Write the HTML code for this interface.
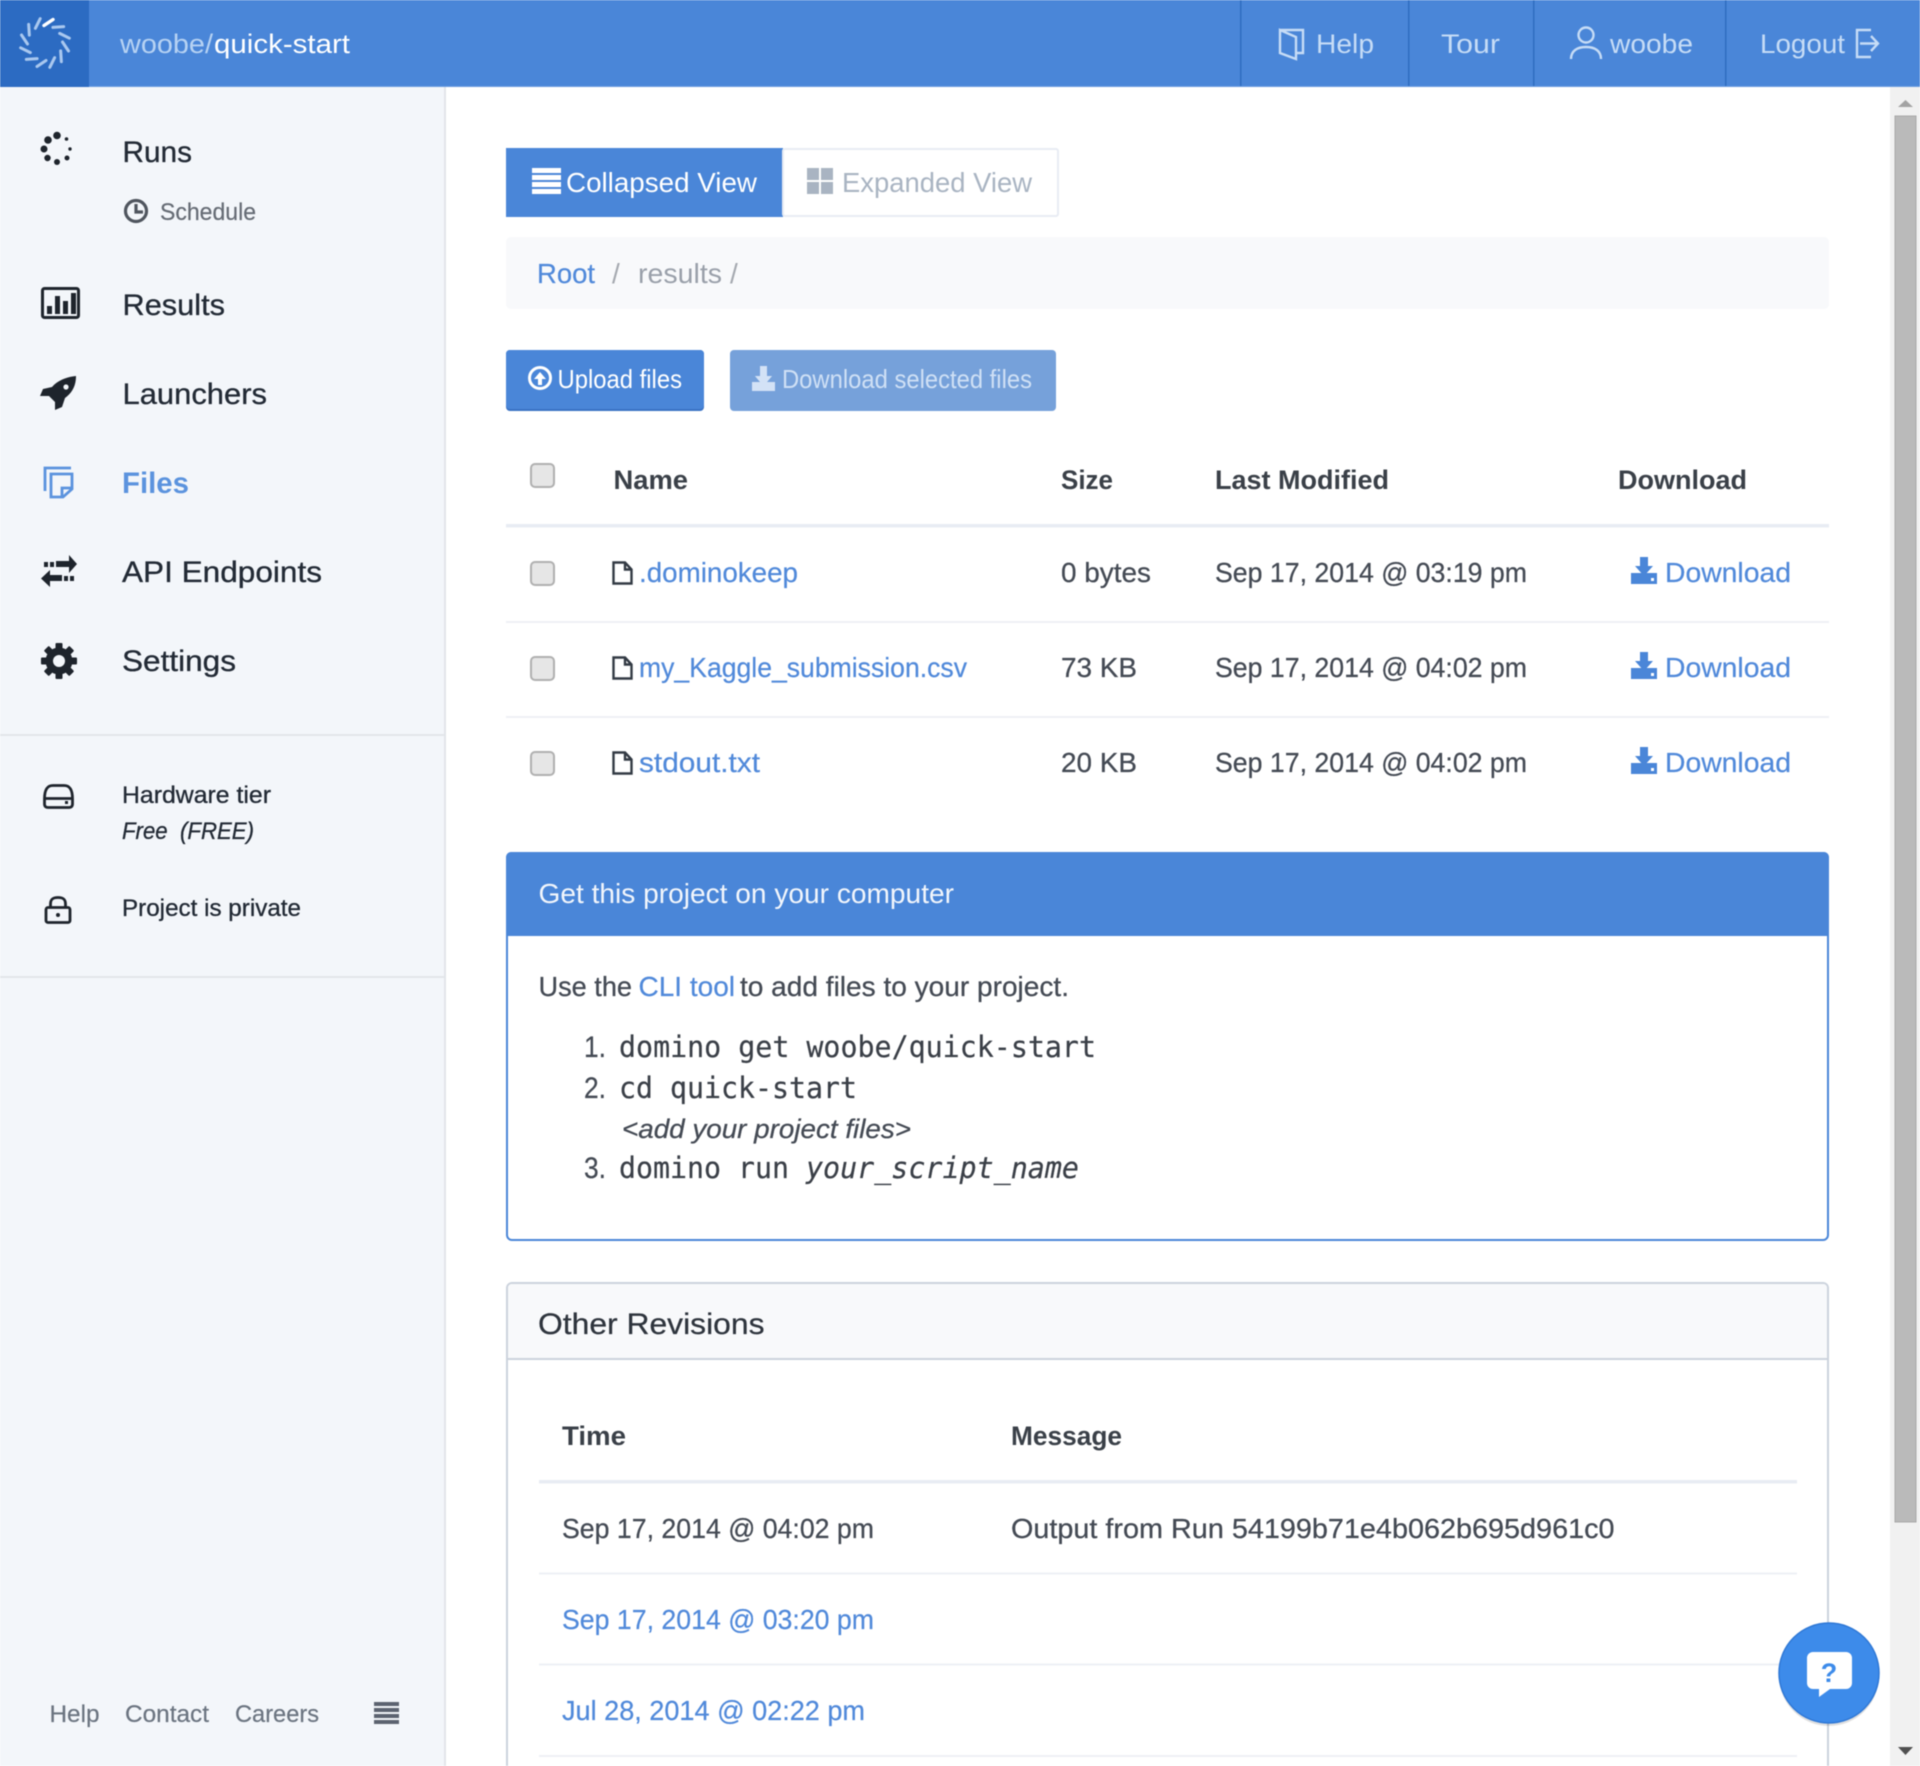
<!DOCTYPE html>
<html><head><meta charset="utf-8"><title>woobe/quick-start</title>
<style>
html,body{margin:0;padding:0;background:#fff;width:1920px;height:1766px;overflow:hidden}
svg{display:block;filter:blur(.45px)}
text{font-family:"Liberation Sans",sans-serif;white-space:pre}
.d{fill:#222a35;stroke:#222a35;stroke-width:.3px}.g{fill:#444a54;stroke:#444a54;stroke-width:.25px}.l{fill:#5089da;stroke:#5089da;stroke-width:.2px}.h{fill:#c6dcf6}.m{font-family:"DejaVu Sans Mono","Liberation Mono",monospace;fill:#3a3f47;stroke:#3a3f47;stroke-width:.2px}
</style></head><body>
<svg width="1920" height="1766" viewBox="0 0 1920 1766" xmlns="http://www.w3.org/2000/svg">
<defs>
<symbol id="dl" viewBox="0 0 26 27" width="26" height="27"><path d="M0 16H26V27H0Z" fill="#4a86d8"/><path d="M9 0H17V9H22L13 19L4 9H9Z" fill="#4a86d8" stroke="#fff" stroke-width="0"/><path d="M3 14L13 21L23 14" fill="none" stroke="#fff" stroke-width="0"/><rect x="20" y="21" width="3" height="3" fill="#fff"/></symbol>
<symbol id="fi" viewBox="0 0 21 24" width="21" height="24"><path d="M1.500 1.500H13L19.500 8.500V22.500H1.500Z M13 1.500V8.500H19.500" fill="none" stroke="#333a44" stroke-width="2.400"/></symbol>
</defs>

<!-- content background -->
<rect width="1920" height="1766" fill="#fff"/>

<!-- sidebar -->
<rect x="0" y="87" width="444" height="1679" fill="#f3f6fa"/>
<rect x="444" y="87" width="2" height="1679" fill="#e2e5ea"/>
<rect x="0" y="734" width="444" height="2" fill="#e3e6ea"/>
<rect x="0" y="976" width="444" height="2" fill="#e3e6ea"/>

<!-- header -->
<rect x="0" y="0" width="1920" height="87" fill="#4a86d8"/>
<rect x="0" y="86" width="1920" height="1" fill="#6c9de0"/>
<rect x="0" y="0" width="89" height="87" fill="#2c6bc2"/>
<g transform="translate(45 43)" stroke-width="3" stroke-linecap="round" stroke="#a9c8ef">
<path d="M-1-17.500L8-23.500" stroke="#fff" stroke-width="3.400"/>
<path d="M-1-17.500L8-23.500" transform="rotate(30)"/><path d="M-1-17.500L8-23.500" transform="rotate(60)"/><path d="M-1-17.500L8-23.500" transform="rotate(90)"/>
<path d="M-1-17.500L8-23.500" transform="rotate(120)"/><path d="M-1-17.500L8-23.500" transform="rotate(150)"/><path d="M-1-17.500L8-23.500" transform="rotate(180)"/>
<path d="M-1-17.500L8-23.500" transform="rotate(210)"/><path d="M-1-17.500L8-23.500" transform="rotate(240)"/><path d="M-1-17.500L8-23.500" transform="rotate(270)"/>
<path d="M-1-17.500L8-23.500" transform="rotate(300)"/><path d="M-1-17.500L8-23.500" transform="rotate(330)"/>
</g>
<text x="120" y="53" font-size="27" fill="#b6d2f3" textLength="93" lengthAdjust="spacingAndGlyphs">woobe/</text>
<text x="214" y="53" font-size="27" fill="#fff" textLength="136" lengthAdjust="spacingAndGlyphs">quick-start</text>

<g fill="#2f6dc0">
<rect x="1240" y="0" width="1.500" height="86"/><rect x="1408" y="0" width="1.500" height="86"/><rect x="1533" y="0" width="1.500" height="86"/><rect x="1725" y="0" width="1.500" height="86"/>
</g>
<g fill="none" stroke="#c6dcf6" stroke-width="2.400">
<path d="M1280 30H1303V53H1296 M1280 30V53L1296 59V37L1280 30Z"/>
<circle cx="1586" cy="35" r="7.500"/>
<path d="M1571 59C1571 51 1577 47 1586 47C1595 47 1601 51 1601 59"/>
<path d="M1871 30H1857V57H1871 M1860 43.500H1878 M1871 36L1878 43.500L1871 51"/>
</g>
<text class="h" x="1316" y="53" font-size="27" textLength="58" lengthAdjust="spacingAndGlyphs">Help</text>
<text class="h" x="1441" y="53" font-size="27" textLength="59" lengthAdjust="spacingAndGlyphs">Tour</text>
<text class="h" x="1610" y="53" font-size="27" textLength="83" lengthAdjust="spacingAndGlyphs">woobe</text>
<text class="h" x="1760" y="53" font-size="27" textLength="85" lengthAdjust="spacingAndGlyphs">Logout</text>

<!-- sidebar icons -->
<g fill="#1e242c">
<circle cx="57" cy="135.500" r="3.800"/><circle cx="66.500" cy="139" r="1.800"/><circle cx="70" cy="149" r="1.700"/><circle cx="67" cy="158" r="2.500"/><circle cx="57" cy="162" r="3"/><circle cx="47.500" cy="158" r="3.200"/><circle cx="44" cy="149" r="3.500"/><circle cx="48" cy="140" r="3.800"/>
</g>
<g fill="none" stroke="#4f555e" stroke-width="3.200"><circle cx="136" cy="211" r="10.500"/><path d="M136 204V212H143"/></g>
<rect x="42.500" y="288.500" width="36" height="29" rx="2" fill="none" stroke="#1e242c" stroke-width="3"/>
<g fill="#1e242c"><rect x="47" y="306" width="5" height="8"/><rect x="55" y="296" width="5" height="18"/><rect x="63" y="301" width="5" height="13"/><rect x="71" y="293" width="5" height="21"/></g>
<path d="M76 376C66 377 57 381 52 387L43 389L40 396L49 396L55 402L55 410L62 407L65 398C72 393 76 386 76 376Z" fill="#1e242c"/><circle cx="66" cy="387" r="2.600" fill="#f3f6fa"/>
<g fill="none" stroke="#5b93de" stroke-width="2.800"><path d="M71 468H45V491"/><path d="M51 474H72V489L63 497H51Z"/><path d="M62 497V488H72"/></g>
<g fill="#1e242c"><path d="M56 561H69V555L77 564L69 573V567H56Z"/><rect x="44" y="562" width="4" height="5"/><rect x="50" y="562" width="4" height="5"/><path d="M62 575H50V570L41 578.500L50 587V581H62Z"/><rect x="64" y="576" width="4" height="5"/><rect x="70" y="576" width="4" height="5"/></g>
<g fill="#1e242c" transform="translate(59 661)"><circle r="13.500"/><g><rect x="-3.500" y="-18" width="7" height="36" rx="1"/><rect x="-3.500" y="-18" width="7" height="36" rx="1" transform="rotate(45)"/><rect x="-3.500" y="-18" width="7" height="36" rx="1" transform="rotate(90)"/><rect x="-3.500" y="-18" width="7" height="36" rx="1" transform="rotate(135)"/></g><circle r="6" fill="#f3f6fa"/></g>
<g fill="none" stroke="#1e242c" stroke-width="2.800"><path d="M44.500 799C44.500 790 47 785.500 53 785.500H64C70 785.500 72.500 790 72.500 799V804C72.500 806.500 71 807.500 69 807.500H48C46 807.500 44.500 806.500 44.500 804Z M44.500 798.500H72.500"/></g><rect x="65" y="801" width="3" height="3" fill="#1e242c"/>
<g fill="none" stroke="#1e242c" stroke-width="2.800"><rect x="46" y="907.500" width="24" height="15" rx="2"/><path d="M50.500 907V904C50.500 899 53 897.500 58 897.500C63 897.500 65.500 899 65.500 904V907"/></g><circle cx="58" cy="915" r="2" fill="#1e242c"/>
<g fill="#5c6370"><rect x="374" y="1702" width="25" height="4"/><rect x="374" y="1708" width="25" height="4"/><rect x="374" y="1714" width="25" height="4"/><rect x="374" y="1720" width="25" height="4"/></g>

<!-- sidebar text -->
<text class="d" x="122.500" y="162" font-size="30" textLength="69.500" lengthAdjust="spacingAndGlyphs">Runs</text>
<text x="160" y="220" font-size="24" fill="#666c75" stroke="#666c75" stroke-width=".2" textLength="96" lengthAdjust="spacingAndGlyphs">Schedule</text>
<text class="d" x="122.500" y="315" font-size="30" textLength="102.500" lengthAdjust="spacingAndGlyphs">Results</text>
<text class="d" x="122.500" y="404" font-size="30" textLength="144.500" lengthAdjust="spacingAndGlyphs">Launchers</text>
<text x="122" y="493" font-size="30" font-weight="bold" fill="#5b93de" textLength="67" lengthAdjust="spacingAndGlyphs">Files</text>
<text class="d" x="122" y="582" font-size="30" textLength="200" lengthAdjust="spacingAndGlyphs">API Endpoints</text>
<text class="d" x="122" y="671" font-size="30" textLength="114" lengthAdjust="spacingAndGlyphs">Settings</text>
<text class="d" x="122" y="803" font-size="24" textLength="149" lengthAdjust="spacingAndGlyphs">Hardware tier</text>
<text class="d" x="122" y="839" font-size="24" font-style="italic" textLength="132" lengthAdjust="spacingAndGlyphs">Free  (FREE)</text>
<text class="d" x="122" y="916" font-size="24" textLength="179" lengthAdjust="spacingAndGlyphs">Project is private</text>
<text x="49.500" y="1722" font-size="24" fill="#6b7480" stroke="#6b7480" stroke-width=".2" textLength="50" lengthAdjust="spacingAndGlyphs">Help</text>
<text x="125" y="1722" font-size="24" fill="#6b7480" stroke="#6b7480" stroke-width=".2" textLength="84" lengthAdjust="spacingAndGlyphs">Contact</text>
<text x="235" y="1722" font-size="24" fill="#6b7480" stroke="#6b7480" stroke-width=".2" textLength="84" lengthAdjust="spacingAndGlyphs">Careers</text>

<!-- view toggle -->
<rect x="506" y="148" width="277" height="69" fill="#4a86d8"/>
<rect x="783" y="149" width="275" height="67" rx="2" fill="#fff" stroke="#e8ecf3" stroke-width="2"/>
<g fill="#fff"><rect x="532" y="168" width="29" height="5"/><rect x="532" y="175" width="29" height="5"/><rect x="532" y="182" width="29" height="5"/><rect x="532" y="189" width="29" height="5"/></g>
<text x="566" y="192" font-size="28" fill="#fff" textLength="191" lengthAdjust="spacingAndGlyphs">Collapsed View</text>
<g fill="#a9b4c2"><rect x="807" y="168" width="12" height="12"/><rect x="821" y="168" width="12" height="12"/><rect x="807" y="182" width="12" height="12"/><rect x="821" y="182" width="12" height="12"/></g>
<text x="842" y="192" font-size="28" fill="#a9b4c2" textLength="190" lengthAdjust="spacingAndGlyphs">Expanded View</text>

<!-- breadcrumb -->
<rect x="506" y="237" width="1323" height="72" rx="5" fill="#f8f9fb"/>
<text class="l" x="537" y="283" font-size="28" textLength="58" lengthAdjust="spacingAndGlyphs">Root</text>
<text x="612" y="283" font-size="28" fill="#a5a9b0">/</text>
<text x="638" y="283" font-size="28" fill="#9aa0aa" textLength="84" lengthAdjust="spacingAndGlyphs">results</text>
<text x="730" y="283" font-size="28" fill="#a5a9b0">/</text>

<!-- buttons -->
<rect x="506" y="350" width="198" height="61" rx="4" fill="#3a72c4"/>
<rect x="506" y="350" width="198" height="59" rx="4" fill="#4a86d8"/>
<circle cx="540" cy="378" r="10.500" fill="none" stroke="#fff" stroke-width="3"/>
<path d="M540 372L546 379H542V385H538V379H534Z" fill="#fff"/>
<text x="557.500" y="388" font-size="26" fill="#fff" textLength="124.500" lengthAdjust="spacingAndGlyphs">Upload files</text>
<rect x="730" y="350" width="326" height="61" rx="4" fill="#76a1da"/>
<path d="M760 366H767V376H772L763.500 386L755 376H760Z" fill="#d3e2f6"/><path d="M752 382H775V391H752Z" fill="#d3e2f6"/><path d="M755 376H772L763.500 386Z" fill="#d3e2f6" stroke="#76a1da" stroke-width="0"/>
<text x="782" y="388" font-size="26" fill="#cfe0f5" textLength="250" lengthAdjust="spacingAndGlyphs">Download selected files</text>

<!-- file table -->
<g fill="#e6e6e6" stroke="#b0b0b0" stroke-width="2">
<rect x="531" y="464" width="23" height="23" rx="4"/>
<rect x="531" y="562" width="23" height="23" rx="4"/>
<rect x="531" y="657" width="23" height="23" rx="4"/>
<rect x="531" y="752" width="23" height="23" rx="4"/>
</g>
<text x="613.500" y="489" font-size="27" font-weight="bold" fill="#3a4048" textLength="74.500" lengthAdjust="spacingAndGlyphs">Name</text>
<text x="1061" y="489" font-size="27" font-weight="bold" fill="#3a4048" textLength="52" lengthAdjust="spacingAndGlyphs">Size</text>
<text x="1215" y="489" font-size="27" font-weight="bold" fill="#3a4048" textLength="174" lengthAdjust="spacingAndGlyphs">Last Modified</text>
<text x="1618" y="489" font-size="27" font-weight="bold" fill="#3a4048" textLength="129" lengthAdjust="spacingAndGlyphs">Download</text>
<rect x="506" y="524" width="1323" height="3.500" fill="#e8ecf3"/>
<rect x="506" y="621" width="1323" height="2" fill="#eef0f5"/>
<rect x="506" y="716" width="1323" height="2" fill="#eef0f5"/>

<use href="#fi" x="612" y="561"/><use href="#fi" x="612" y="656"/><use href="#fi" x="612" y="751"/>
<text class="l" x="639" y="582" font-size="28" textLength="159" lengthAdjust="spacingAndGlyphs">.dominokeep</text>
<text class="l" x="639" y="677" font-size="28" textLength="328" lengthAdjust="spacingAndGlyphs">my_Kaggle_submission.csv</text>
<text class="l" x="639" y="772" font-size="28" textLength="121" lengthAdjust="spacingAndGlyphs">stdout.txt</text>
<text class="g" x="1061" y="582" font-size="28" textLength="90" lengthAdjust="spacingAndGlyphs">0 bytes</text>
<text class="g" x="1061" y="677" font-size="28" textLength="76" lengthAdjust="spacingAndGlyphs">73 KB</text>
<text class="g" x="1061" y="772" font-size="28" textLength="76" lengthAdjust="spacingAndGlyphs">20 KB</text>
<text class="g" x="1215" y="582" font-size="28" textLength="312" lengthAdjust="spacingAndGlyphs">Sep 17, 2014 @ 03:19 pm</text>
<text class="g" x="1215" y="677" font-size="28" textLength="312" lengthAdjust="spacingAndGlyphs">Sep 17, 2014 @ 04:02 pm</text>
<text class="g" x="1215" y="772" font-size="28" textLength="312" lengthAdjust="spacingAndGlyphs">Sep 17, 2014 @ 04:02 pm</text>
<use href="#dl" x="1631" y="557"/><use href="#dl" x="1631" y="652"/><use href="#dl" x="1631" y="747"/>
<text class="l" x="1665" y="582" font-size="28" textLength="126" lengthAdjust="spacingAndGlyphs">Download</text>
<text class="l" x="1665" y="677" font-size="28" textLength="126" lengthAdjust="spacingAndGlyphs">Download</text>
<text class="l" x="1665" y="772" font-size="28" textLength="126" lengthAdjust="spacingAndGlyphs">Download</text>

<!-- get project panel -->
<rect x="507" y="853" width="1321" height="387" rx="5" fill="#fff" stroke="#4a86d8" stroke-width="2"/>
<path d="M506 857a5 5 0 0 1 5-5H1824a5 5 0 0 1 5 5V936H506Z" fill="#4a86d8"/>
<text x="538.500" y="903" font-size="28" fill="#f2f6fc" textLength="415.500" lengthAdjust="spacingAndGlyphs">Get this project on your computer</text>
<text class="g" x="538.500" y="996" font-size="28" textLength="93.500" lengthAdjust="spacingAndGlyphs">Use the</text>
<text class="l" x="638.500" y="996" font-size="28" textLength="96.500" lengthAdjust="spacingAndGlyphs">CLI tool</text>
<text class="g" x="740" y="996" font-size="28" textLength="329" lengthAdjust="spacingAndGlyphs">to add files to your project.</text>
<text class="g" x="584" y="1057" font-size="30" textLength="22" lengthAdjust="spacingAndGlyphs">1.</text>
<text class="m" x="619" y="1057" font-size="29" textLength="477" lengthAdjust="spacingAndGlyphs">domino get woobe/quick-start</text>
<text class="g" x="584" y="1098" font-size="30" textLength="22" lengthAdjust="spacingAndGlyphs">2.</text>
<text class="m" x="619" y="1098" font-size="29" textLength="238" lengthAdjust="spacingAndGlyphs">cd quick-start</text>
<text class="g" x="622" y="1138" font-size="27" font-style="italic" textLength="289" lengthAdjust="spacingAndGlyphs">&lt;add your project files&gt;</text>
<text class="g" x="584" y="1178" font-size="30" textLength="22" lengthAdjust="spacingAndGlyphs">3.</text>
<text class="m" x="619" y="1178" font-size="29" textLength="170" lengthAdjust="spacingAndGlyphs">domino run</text>
<text class="m" x="806" y="1178" font-size="29" font-style="italic" textLength="273" lengthAdjust="spacingAndGlyphs">your_script_name</text>

<!-- other revisions -->
<path d="M507 1780V1288a5 5 0 0 1 5-5H1823a5 5 0 0 1 5 5V1780Z" fill="#fff" stroke="#ccd3dd" stroke-width="2"/>
<path d="M508 1288a4 4 0 0 1 4-4H1823a4 4 0 0 1 4 4V1358H508Z" fill="#f8f9fb"/>
<rect x="507" y="1358" width="1321" height="2" fill="#ccd3dd"/>
<text x="538" y="1334" font-size="30" fill="#2e343d" stroke="#2e343d" stroke-width=".25" textLength="226.500" lengthAdjust="spacingAndGlyphs">Other Revisions</text>
<text x="562" y="1445" font-size="27" font-weight="bold" fill="#3a4048" textLength="64" lengthAdjust="spacingAndGlyphs">Time</text>
<text x="1011" y="1445" font-size="27" font-weight="bold" fill="#3a4048" textLength="111" lengthAdjust="spacingAndGlyphs">Message</text>
<rect x="539" y="1480" width="1258" height="3.500" fill="#e8ecf3"/>
<rect x="539" y="1572.500" width="1258" height="2" fill="#eef0f5"/>
<rect x="539" y="1663.500" width="1258" height="2" fill="#eef0f5"/>
<rect x="539" y="1755" width="1258" height="2" fill="#eef0f5"/>
<text class="g" x="562" y="1538" font-size="28" textLength="312" lengthAdjust="spacingAndGlyphs">Sep 17, 2014 @ 04:02 pm</text>
<text class="g" x="1011" y="1538" font-size="28" textLength="603.500" lengthAdjust="spacingAndGlyphs">Output from Run 54199b71e4b062b695d961c0</text>
<text class="l" x="562" y="1629" font-size="28" textLength="312" lengthAdjust="spacingAndGlyphs">Sep 17, 2014 @ 03:20 pm</text>
<text class="l" x="562" y="1720" font-size="28" textLength="303" lengthAdjust="spacingAndGlyphs">Jul 28, 2014 @ 02:22 pm</text>

<!-- scrollbar -->
<rect x="1890" y="87" width="30" height="1679" fill="#f1f1f1"/>
<rect x="1895" y="116" width="21" height="1406" fill="#bababa" stroke="#a8a8a8" stroke-width="1"/>
<path d="M1898 107L1905.500 100L1913 107Z" fill="#a3a3a3"/>
<path d="M1898 1747L1905.500 1755L1913 1747Z" fill="#505050"/>

<!-- help bubble -->
<circle cx="1829" cy="1676" r="50" fill="#000" opacity=".12"/>
<circle cx="1829" cy="1673" r="50" fill="#3d8bea" stroke="#2f78d6" stroke-width="1.500"/>
<path d="M1813 1652H1846a6 6 0 0 1 6 6V1683a6 6 0 0 1-6 6H1830L1819 1697V1689H1813a6 6 0 0 1-6-6V1658a6 6 0 0 1 6-6Z" fill="#fff"/>
<text x="1829" y="1682" font-size="27" font-weight="bold" fill="#3d8bea" text-anchor="middle">?</text>
</svg>
</body></html>
